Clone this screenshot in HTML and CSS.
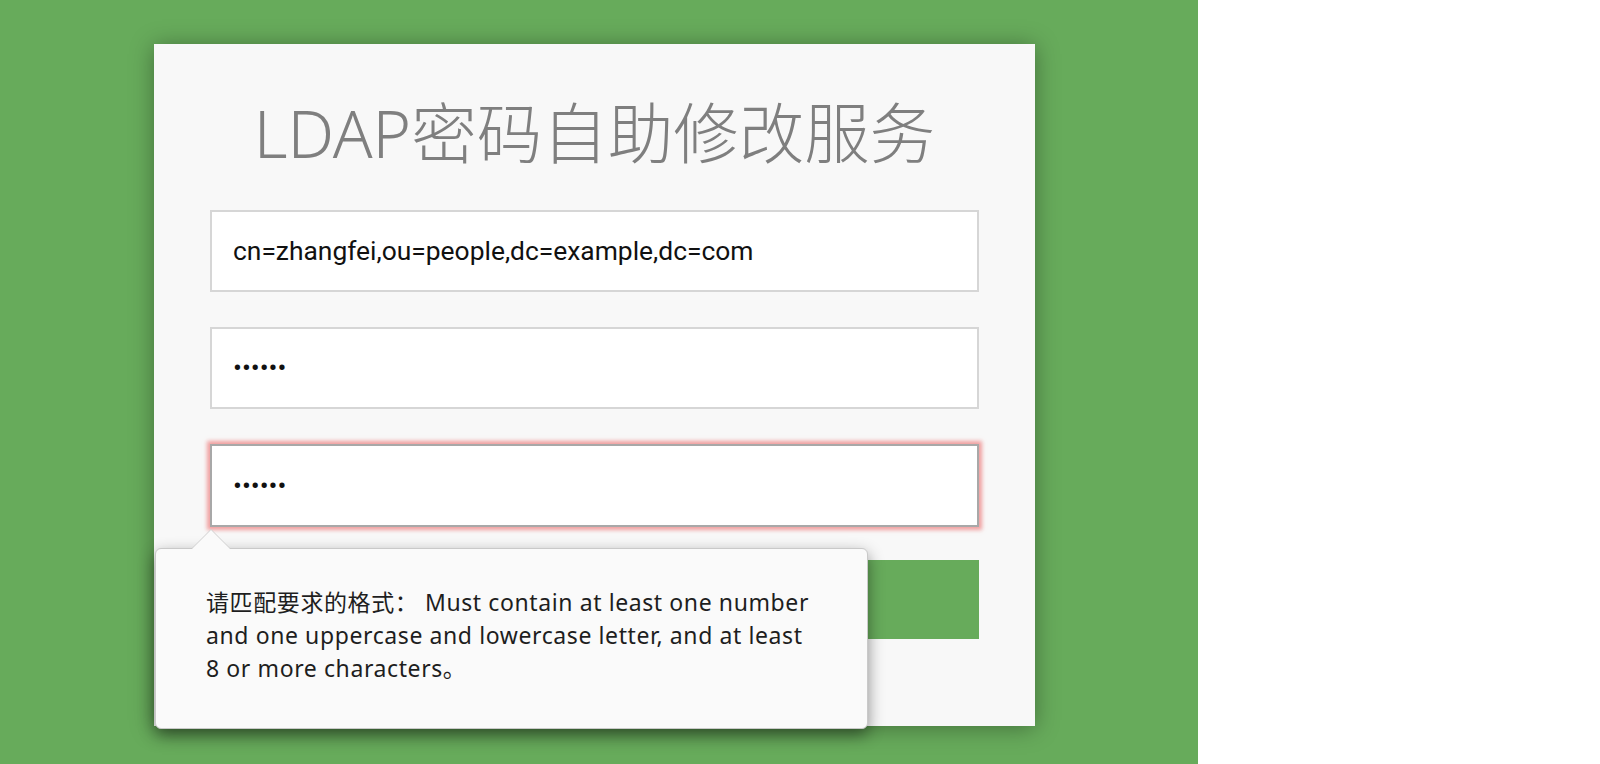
FILE: index.html
```html
<!DOCTYPE html>
<html lang="zh-CN">
<head>
<meta charset="utf-8">
<title>LDAP密码自助修改服务</title>
<link rel="stylesheet" href="styles.css">
</head>
<body>
<div class="page">
  <div class="stage">
    <div class="card">
      <h1 class="title">LDAP密码自助修改服务</h1>
      <form class="form">
        <input class="field" type="text" value="cn=zhangfei,ou=people,dc=example,dc=com">
        <input class="field" type="password" value="123456">
        <input class="field field-invalid" type="password" value="123456">
        <button class="submit" type="button" aria-label="提交"></button>
      </form>
      <div class="tooltip">
        <div class="tooltip-arrow"></div>
        <p class="tooltip-text">请匹配要求的格式： Must contain at least one number<br>and one uppercase and lowercase letter, and at least<br>8 or more characters。</p>
      </div>
    </div>
  </div>
  <div class="blank"></div>
</div>
</body>
</html>
```

FILE: styles.css
```css
html, body {
  margin: 0;
  padding: 0;
  background: #ffffff;
}
.page {
  display: flex;
  width: 1600px;
  height: 764px;
  overflow: hidden;
}
.stage {
  width: 1198px;
  height: 764px;
  background: #67ab5b;
  padding: 44px 0 0 154px;
  box-sizing: border-box;
}
.blank {
  flex: 1;
  background: #ffffff;
}
.card {
  position: relative;
  width: 881px;
  height: 682px;
  box-sizing: border-box;
  background: #f8f8f8;
  padding: 52px 56px 0 56px;
  box-shadow: 0 2px 22px rgba(0, 0, 0, 0.35);
}
.title {
  margin: 0;
  font-family: "Noto Sans", "Noto Sans CJK SC", sans-serif;
  font-weight: 300;
  font-size: 65.5px;
  line-height: 74px;
  height: 74px;
  color: #7f7f7f;
  text-align: center;
  white-space: nowrap;
}
.form {
  margin-top: 40px;
  display: flex;
  flex-direction: column;
  gap: 35px;
}
.field {
  display: block;
  width: 100%;
  height: 82px;
  box-sizing: border-box;
  border: 2px solid #d6d6d6;
  background: #ffffff;
  padding: 0 21px;
  font-family: Roboto, "Noto Sans CJK SC", sans-serif;
  font-size: 26.4px;
  color: #111;
  outline: none;
  margin: 0;
}
.field-invalid {
  height: 83px;
  border-color: #a8a8a8;
  box-shadow: 0 0 4px 3px rgba(238, 130, 130, 0.75);
}
.submit {
  margin-top: -2px;
  height: 79px;
  border: none;
  background: #67ab5b;
}
.tooltip {
  position: absolute;
  left: 1px;
  top: 504px;
  width: 713px;
  height: 181px;
  box-sizing: border-box;
  background: #fafafa;
  border-radius: 6px;
  border: 1px solid #c9c9c9;
  box-shadow: 0 6px 16px rgba(0, 0, 0, 0.45);
  padding: 37px 10px 0 50px;
}
.tooltip-arrow {
  position: absolute;
  left: 36px;
  top: -19px;
  width: 0;
  height: 0;
  border-left: 19px solid transparent;
  border-right: 19px solid transparent;
  border-bottom: 19px solid #fafafa;
  filter: drop-shadow(0 -1px 0 #d0d0d0);
}
.tooltip-text {
  margin: 0;
  font-family: "Noto Sans", "Noto Sans CJK SC", sans-serif;
  font-size: 23px;
  letter-spacing: 0.6px;
  line-height: 33px;
  color: #1e1e1e;
  white-space: nowrap;
}
```
